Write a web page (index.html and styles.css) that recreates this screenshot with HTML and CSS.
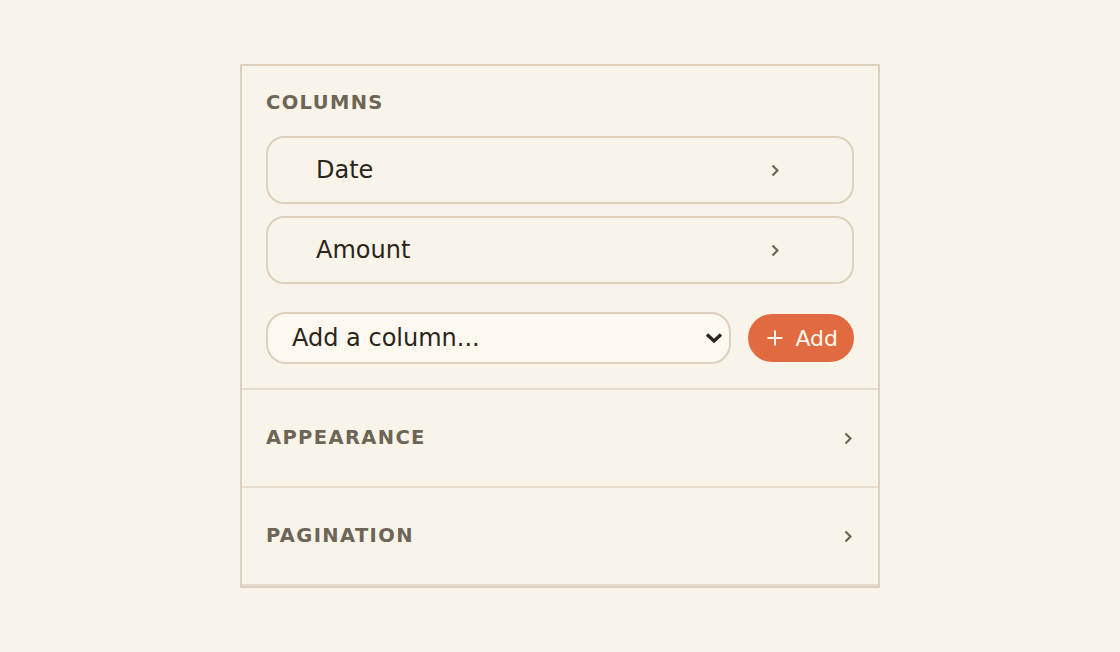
FILE: index.html
```html
<!DOCTYPE html>
<html lang="en">
<head>
    <meta charset="UTF-8">
    <meta name="viewport" content="width=device-width, initial-scale=1.0">
    <title>Table Settings</title>
    <link rel="stylesheet" href="styles.css">
</head>
<body>
    <div class="panel">
        <div class="section">
            <div class="section-title">Columns</div>

            <div class="column-list">
                <div class="column-item">
                    <span class="column-name">Date</span>
                    <svg class="chevron" width="8" height="13" viewBox="0 0 8 13"><polyline points="1.5,1.5 6.5,6.5 1.5,11.5" /></svg>
                </div>
                <div class="column-item">
                    <span class="column-name">Amount</span>
                    <svg class="chevron" width="8" height="13" viewBox="0 0 8 13"><polyline points="1.5,1.5 6.5,6.5 1.5,11.5" /></svg>
                </div>
            </div>

            <div class="add-row">
                <div class="select-wrap">
                    <select class="column-select">
                        <option>Add a column...</option>
                        <option>Category</option>
                        <option>Description</option>
                        <option>Status</option>
                    </select>
                    <svg class="select-arrow" width="18" height="12" viewBox="0 0 18 12"><polyline points="2,2.5 9,9 16,2.5" /></svg>
                </div>
                <button class="btn-add">
                    <svg width="18" height="18" viewBox="0 0 18 18"><path d="M9 1.5v15M1.5 9h15" /></svg>
                    Add
                </button>
            </div>
        </div>

        <div class="section section-collapsed">
            <div class="section-title">Appearance</div>
            <svg class="chevron" width="8" height="13" viewBox="0 0 8 13"><polyline points="1.5,1.5 6.5,6.5 1.5,11.5" /></svg>
        </div>

        <div class="section section-collapsed">
            <div class="section-title">Pagination</div>
            <svg class="chevron" width="8" height="13" viewBox="0 0 8 13"><polyline points="1.5,1.5 6.5,6.5 1.5,11.5" /></svg>
        </div>
    </div>
</body>
</html>
```

FILE: styles.css
```css
* {
    margin: 0;
    padding: 0;
    box-sizing: border-box;
    font-family: 'DejaVu Sans', sans-serif;
}

body {
    background-color: #f9f4ea;
    display: flex;
    justify-content: center;
    align-items: center;
    min-height: 100vh;
    color: #2b2419;
}

.panel {
    width: 640px;
    background-color: #f9f4ea;
    border: 2px solid #ddd0bc;
}

.section {
    padding: 25px 24px 24px;
    border-bottom: 2px solid #e8ddcc;
}

.section-title {
    font-size: 19.5px;
    line-height: 24px;
    font-weight: 700;
    letter-spacing: 0.07em;
    text-transform: uppercase;
    color: #6d6556;
}

.section > .section-title {
    margin-bottom: 21px;
}

.section-collapsed {
    display: flex;
    align-items: center;
    justify-content: space-between;
    padding: 36px 26px 36px 24px;
    cursor: pointer;
}

.section-collapsed > .section-title {
    margin-bottom: 0;
}

.chevron {
    fill: none;
    stroke: #6d6556;
    stroke-width: 2.2;
    flex-shrink: 0;
}

.column-list {
    display: flex;
    flex-direction: column;
    gap: 12px;
}

.column-item {
    display: flex;
    align-items: center;
    justify-content: space-between;
    height: 68px;
    padding: 0 73px 0 48px;
    border: 2px solid #ddd0bc;
    border-radius: 18px;
    cursor: pointer;
}

.column-name {
    font-size: 24px;
    color: #2b2419;
}

.add-row {
    display: flex;
    align-items: center;
    gap: 17px;
    margin-top: 28px;
}

.select-wrap {
    flex: 1;
    position: relative;
    display: flex;
}

.column-select {
    flex: 1;
    height: 52px;
    padding: 0 48px 0 24px;
    font-size: 24px;
    color: #2b2419;
    background-color: #fdf9f0;
    border: 2px solid #ddd0bc;
    border-radius: 20px;
    outline: none;
    appearance: none;
    -webkit-appearance: none;
    cursor: pointer;
}

.select-arrow {
    position: absolute;
    right: 8px;
    top: 20px;
    fill: none;
    stroke: #2b2419;
    stroke-width: 3.4;
    pointer-events: none;
}

.btn-add {
    display: flex;
    align-items: center;
    gap: 11px;
    height: 48px;
    padding: 0 16px 0 18px;
    background-color: #e26a40;
    color: #fff8ee;
    border: none;
    border-radius: 24px;
    font-size: 22px;
    cursor: pointer;
}

.btn-add svg {
    fill: none;
    stroke: #fff8ee;
    stroke-width: 2;
}

.btn-add:hover {
    background-color: #d45e35;
}
```
